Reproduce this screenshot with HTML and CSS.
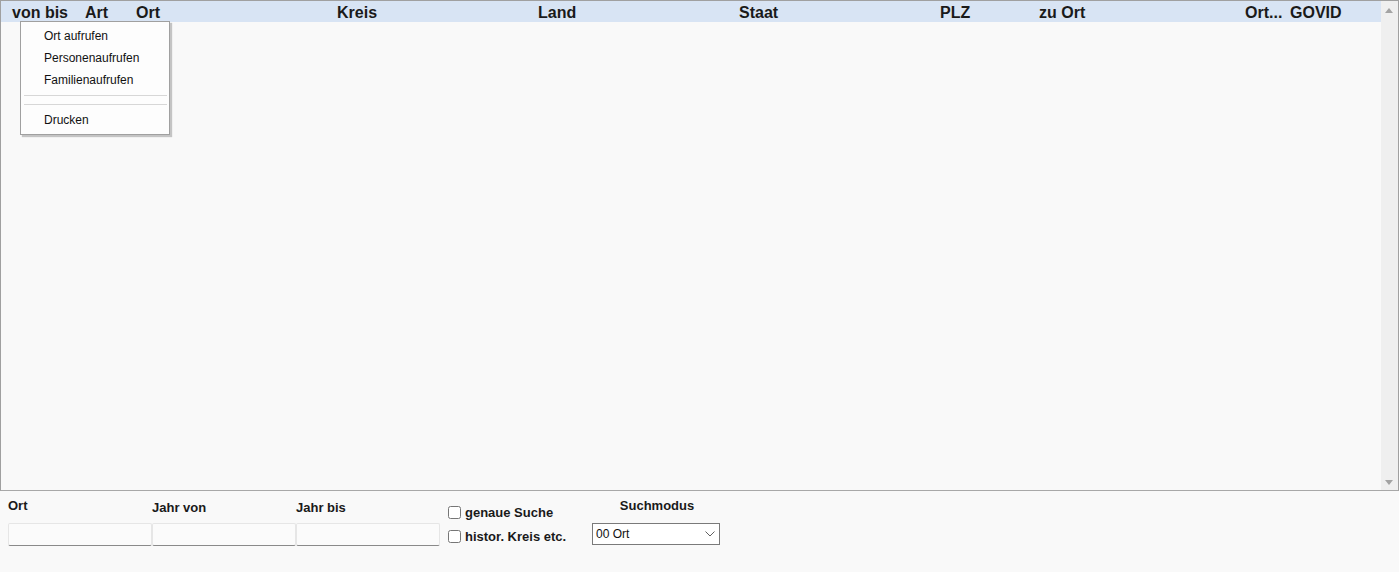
FILE: index.html
```html
<!DOCTYPE html>
<html>

<head>
  <meta charset="utf-8">
  <title>Orte</title>
  <link rel="stylesheet" href="styles.css">
</head>

<body>
  <!-- Liste -->
  <div class="grid">
    <div class="table">
      <div class="head">
        <div class="col c-vonbis">von bis</div>
        <div class="col c-art">Art</div>
        <div class="col c-ort">Ort</div>
        <div class="col c-kreis">Kreis</div>
        <div class="col c-land">Land</div>
        <div class="col c-staat">Staat</div>
        <div class="col c-plz">PLZ</div>
        <div class="col c-zuort">zu Ort</div>
        <div class="col c-ortx">Ort...</div>
        <div class="col c-govid">GOVID</div>
      </div>
    </div>
    <div class="scrollbar">
      <span class="arrow up"></span>
      <span class="arrow down"></span>
    </div>

    <ul class="menu">
      <li>Ort aufrufen</li>
      <li>Personenaufrufen</li>
      <li>Familienaufrufen</li>
      <li class="sep"></li>
      <li class="sep"></li>
      <li>Drucken</li>
    </ul>
  </div>

  <!-- Suche -->
  <div class="search">
    <div class="field">
      <label class="lbl">Ort</label>
      <input type="text" class="box">
    </div>
    <div class="field">
      <label class="lbl lower">Jahr von</label>
      <input type="text" class="box">
    </div>
    <div class="field">
      <label class="lbl lower">Jahr bis</label>
      <input type="text" class="box">
    </div>
    <div class="checks">
      <label class="check"><input type="checkbox"> genaue Suche</label>
      <label class="check"><input type="checkbox"> histor. Kreis etc.</label>
    </div>
    <div class="mode">
      <div class="lbl center">Suchmodus</div>
      <div class="select">
        <span>00 Ort</span>
        <svg width="10" height="6" viewBox="0 0 10 6"><path d="M0.5 0.5 L5 5 L9.5 0.5" fill="none" stroke="#606060" stroke-width="1"/></svg>
      </div>
    </div>
  </div>
</body>

</html>
```

FILE: styles.css
```css
/* Grundlayout */
html,
body {
  margin: 0;
  padding: 0;
  background: #f9f9f9;
  font-family: "Liberation Sans", Arial, sans-serif;
  color: #1a1a1a;
}

.grid {
  position: relative;
  display: flex;
  height: 491px;
  box-sizing: border-box;
  border: 1px solid #a0a0a0;
  border-bottom-color: #a8a8a8;
  background: #f9f9f9;
}

.table {
  flex: 1;
}

.head {
  display: flex;
  height: 20px;
  padding-top: 1px;
  line-height: 21px;
  background: #d8e4f4;
  font-size: 16px;
  font-weight: bold;
  white-space: nowrap;
}

.col {
  flex: none;
}

.c-vonbis { padding-left: 11px; width: 73px; }
.c-art { width: 51px; }
.c-ort { width: 201px; }
.c-kreis { width: 201px; }
.c-land { width: 201px; }
.c-staat { width: 201px; }
.c-plz { width: 99px; }
.c-zuort { width: 206px; }
.c-ortx { width: 45px; }

.scrollbar {
  position: relative;
  width: 17px;
  background: #efefef;
}

.arrow {
  position: absolute;
  left: 4px;
  width: 0;
  height: 0;
  border-left: 4.5px solid transparent;
  border-right: 4.5px solid transparent;
}

.arrow.up {
  top: 7px;
  border-bottom: 5px solid #a3a3a3;
}

.arrow.down {
  bottom: 5px;
  border-top: 5px solid #a3a3a3;
}

/* Kontextmenue */
.menu {
  position: absolute;
  left: 19px;
  top: 20px;
  width: 148px;
  margin: 0;
  padding: 3px 0;
  list-style: none;
  background: #fdfdfd;
  border: 1px solid #a0a0a0;
  box-shadow: 2px 2px 1px #c4c4c4;
  font-size: 12px;
  color: #111;
}

.menu li {
  height: 22px;
  line-height: 22px;
  padding-left: 23px;
}

.menu li.sep {
  height: 9px;
  padding: 0;
  margin: 0 2px 0 3px;
  position: relative;
}

.menu li.sep::after {
  content: "";
  position: absolute;
  left: 0;
  right: 0;
  top: 4px;
  border-top: 1px solid #d7d7d7;
}

/* Suchbereich */
.search {
  display: flex;
  padding: 7px 0 0 8px;
}

.lbl {
  display: block;
  font-size: 13px;
  font-weight: bold;
  height: 15px;
  line-height: 15px;
  color: #1a1a1a;
}

.lbl.lower {
  margin-top: 2px;
  margin-bottom: -2px;
}

.field {
  display: flex;
  flex-direction: column;
  width: 144px;
}

.box {
  margin-top: 10px;
  width: 144px;
  height: 23px;
  box-sizing: border-box;
  border: 1px solid #e6e6e6;
  border-bottom: 1px solid #8a8a8a;
  border-radius: 2px;
  background: #fbfbfb;
  padding: 0 4px;
}

.checks {
  display: flex;
  flex-direction: column;
  gap: 6px;
  width: 144px;
  padding-left: 8px;
  padding-top: 5px;
}

.check {
  display: flex;
  align-items: center;
  height: 18px;
  font-size: 13px;
  font-weight: bold;
}

.check input {
  margin: 0 4px 0 0;
  width: 13px;
  height: 13px;
}

.mode {
  width: 128px;
}

.center {
  text-align: center;
  padding-left: 0;
  margin-left: 2px;
}

.select {
  display: flex;
  align-items: center;
  justify-content: space-between;
  margin-top: 10px;
  height: 22px;
  box-sizing: border-box;
  border: 1px solid #7a7a7a;
  background: #fff;
  padding: 0 4px 0 3px;
  font-size: 12px;
  color: #111;
}
```
